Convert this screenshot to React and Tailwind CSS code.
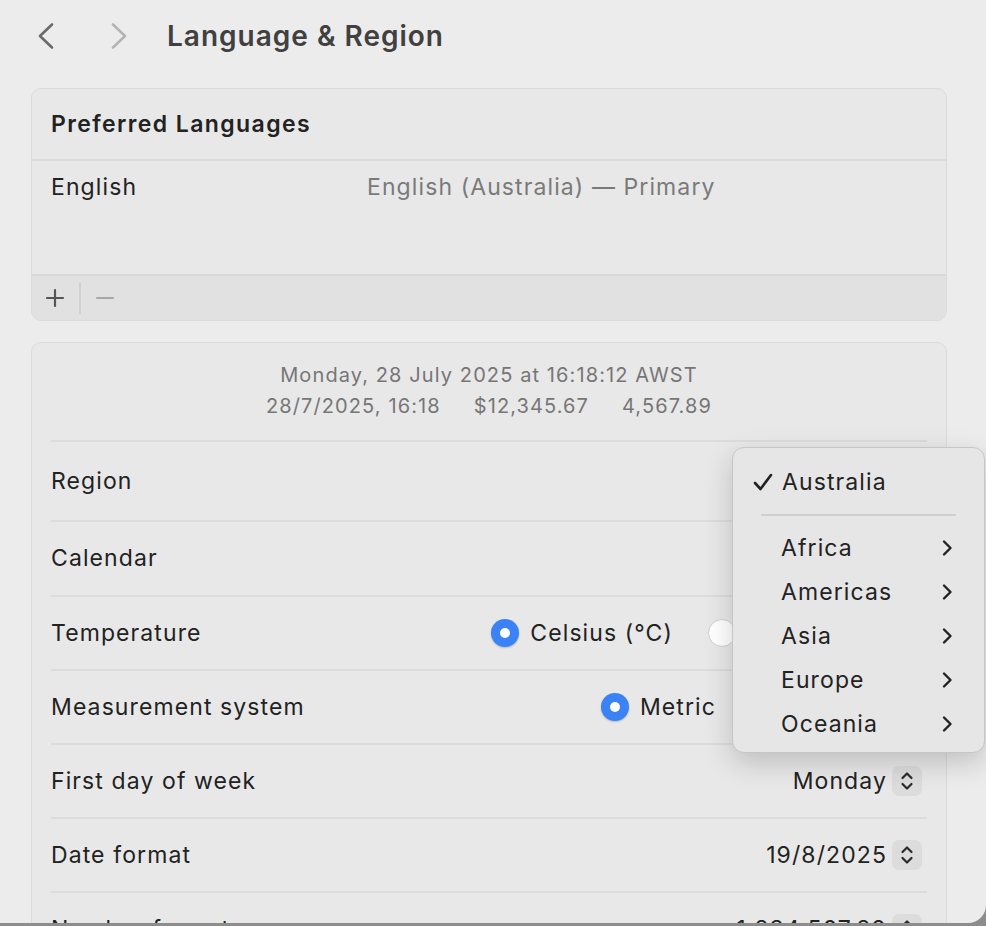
import React from 'react';

const font = { fontFamily: 'Inter, "Noto Sans", sans-serif' };

// body text on macOS is a touch wider than Inter, so widen it with tracking
const body = 'text-[23px] tracking-[1.1px] text-[#222]';

function Stepper() {
  return (
    <div className="w-[30px] h-[30px] rounded-[7px] bg-[#dcdcdc] flex items-center justify-center">
      <svg width="14" height="22" viewBox="0 0 14 22" fill="none" stroke="#2a2a2a" strokeWidth="2.2" strokeLinecap="round" strokeLinejoin="round">
        <path d="M2.5 8 L7 3.5 L11.5 8" />
        <path d="M2.5 14 L7 18.5 L11.5 14" />
      </svg>
    </div>
  );
}

function Popup({ value }) {
  return (
    <div className="flex items-center gap-[5px] mr-[5px]">
      <span className={body}>{value}</span>
      <Stepper />
    </div>
  );
}

function Radio({ checked, label, className = '' }) {
  return (
    <div className={`flex items-center gap-[11px] ${className}`}>
      {checked ? (
        <div className="w-[28px] h-[28px] rounded-full bg-[#3b82f6] flex items-center justify-center shadow-[0_1px_2px_rgba(0,0,0,0.2)]">
          <div className="w-[10px] h-[10px] rounded-full bg-white" />
        </div>
      ) : (
        <div className="w-[28px] h-[28px] rounded-full bg-white border border-[#cfcfcf]" />
      )}
      <span className={body}>{label}</span>
    </div>
  );
}

function Row({ label, h = 'h-[74px]', children }) {
  return (
    <div className={`flex items-center justify-between border-t-2 border-[#dcdcdc] ${h}`}>
      <span className={body}>{label}</span>
      {children}
    </div>
  );
}

function Chevron() {
  return (
    <svg width="14" height="20" viewBox="0 0 14 20" fill="none" stroke="#222" strokeWidth="2.4" strokeLinecap="round" strokeLinejoin="round">
      <path d="M4 3.5 L10.5 10 L4 16.5" />
    </svg>
  );
}

function RegionMenu() {
  const items = ['Africa', 'Americas', 'Asia', 'Europe', 'Oceania'];
  return (
    <div className="absolute left-[732px] top-[447px] w-[253px] h-[306px] rounded-[12px] bg-[#e6e6e6] border border-[#c6c6c6] shadow-[0_10px_28px_rgba(0,0,0,0.18)] pt-[12px]">
      <div className="h-[44px] flex items-center pl-[19px]">
        <svg width="22" height="22" viewBox="0 0 22 22" fill="none" stroke="#222" strokeWidth="2.6" strokeLinecap="round" strokeLinejoin="round">
          <path d="M3 12 L8.5 18 L19 4" />
        </svg>
        <span className={`ml-[8px] ${body}`}>Australia</span>
      </div>
      <div className="h-[22px] flex items-center px-[28px]">
        <div className="w-full h-[2px] bg-[#cfcfcf]" />
      </div>
      {items.map((it) => (
        <div key={it} className="h-[44px] flex items-center justify-between pl-[48px] pr-[30px]">
          <span className={body}>{it}</span>
          <Chevron />
        </div>
      ))}
    </div>
  );
}

export default function App() {
  return (
    <div className="w-[986px] h-[926px] bg-[#8d8d8d] overflow-hidden" style={font}>
      <div className="relative w-[986px] h-[923px] bg-[#ececec] rounded-br-[18px] overflow-hidden">
        {/* Toolbar */}
        <div className="h-[72px] flex items-center pl-[36px]">
          <svg width="20" height="28" viewBox="0 0 20 28" fill="none" stroke="#6a6a6a" strokeWidth="2.6" strokeLinecap="round" strokeLinejoin="round">
            <path d="M16 2.5 L4 14 L16 25.5" />
          </svg>
          <svg className="ml-[53px]" width="20" height="28" viewBox="0 0 20 28" fill="none" stroke="#b4b4b4" strokeWidth="2.6" strokeLinecap="round" strokeLinejoin="round">
            <path d="M4 2.5 L16 14 L4 25.5" />
          </svg>
          <h1 className="ml-[38px] text-[28px] font-semibold text-[#404040] tracking-[1px]">Language &amp; Region</h1>
        </div>

        <div className="px-[31px] pt-[16px] w-[978px]">
          {/* Preferred Languages */}
          <div className="rounded-[10px] bg-[#e8e8e8] border border-[#dbdbdb] overflow-hidden">
            <div className="h-[72px] flex items-center px-[19px] border-b-2 border-[#dcdcdc]">
              <span className="text-[23px] tracking-[1.4px] font-semibold text-[#222]">Preferred Languages</span>
            </div>
            <div className="h-[113px] px-[19px] pt-[10px]">
              <div className="flex items-center h-[32px]">
                <span className={`w-[316px] ${body}`}>English</span>
                <span className="text-[23px] tracking-[1.1px] text-[#7a7a7a]">English (Australia) — Primary</span>
              </div>
            </div>
            <div className="h-[46px] bg-[#e1e1e1] border-t-2 border-[#d8d8d8] flex items-center pl-[13px]">
              <svg width="20" height="20" viewBox="0 0 20 20" stroke="#555" strokeWidth="2.2" strokeLinecap="round">
                <path d="M10 2 V18 M2 10 H18" />
              </svg>
              <div className="ml-[14px] w-[2px] h-[32px] bg-[#d2d2d2]" />
              <svg className="ml-[14px]" width="20" height="20" viewBox="0 0 20 20" stroke="#a8a8a8" strokeWidth="2.2" strokeLinecap="round">
                <path d="M2 10 H18" />
              </svg>
            </div>
          </div>

          {/* Region settings */}
          <div className="mt-[21px] rounded-[10px] bg-[#e8e8e8] border border-[#dbdbdb] px-[19px] h-[700px]">
            <div className="pt-[17px] pb-[18px] text-center text-[20px] tracking-[1.1px] leading-[31px] text-[#767676]">
              <div>Monday, 28 July 2025 at 16:18:12 AWST</div>
              <div className="flex justify-center gap-[33px]">
                <span>28/7/2025, 16:18</span>
                <span>$12,345.67</span>
                <span>4,567.89</span>
              </div>
            </div>
            <Row label="Region" h="h-[80px]">
              <Popup value="Australia" />
            </Row>
            <Row label="Calendar" h="h-[75px]">
              <Popup value="Gregorian" />
            </Row>
            <Row label="Temperature">
              <div className="flex items-center gap-[35px]">
                <Radio checked label="Celsius (°C)" />
                <Radio label="Fahrenheit (°F)" className="w-[219px] overflow-hidden" />
              </div>
            </Row>
            <Row label="Measurement system">
              <div className="flex items-center gap-[35px]">
                <Radio checked label="Metric" />
                <div className="w-[176px] flex items-center gap-[20px]">
                  <Radio label="US" />
                  <Radio label="UK" />
                </div>
              </div>
            </Row>
            <Row label="First day of week">
              <Popup value="Monday" />
            </Row>
            <Row label="Date format">
              <Popup value="19/8/2025" />
            </Row>
            <Row label="Number format">
              <Popup value="1,234,567.89" />
            </Row>
          </div>
        </div>

        <RegionMenu />
      </div>
    </div>
  );
}
